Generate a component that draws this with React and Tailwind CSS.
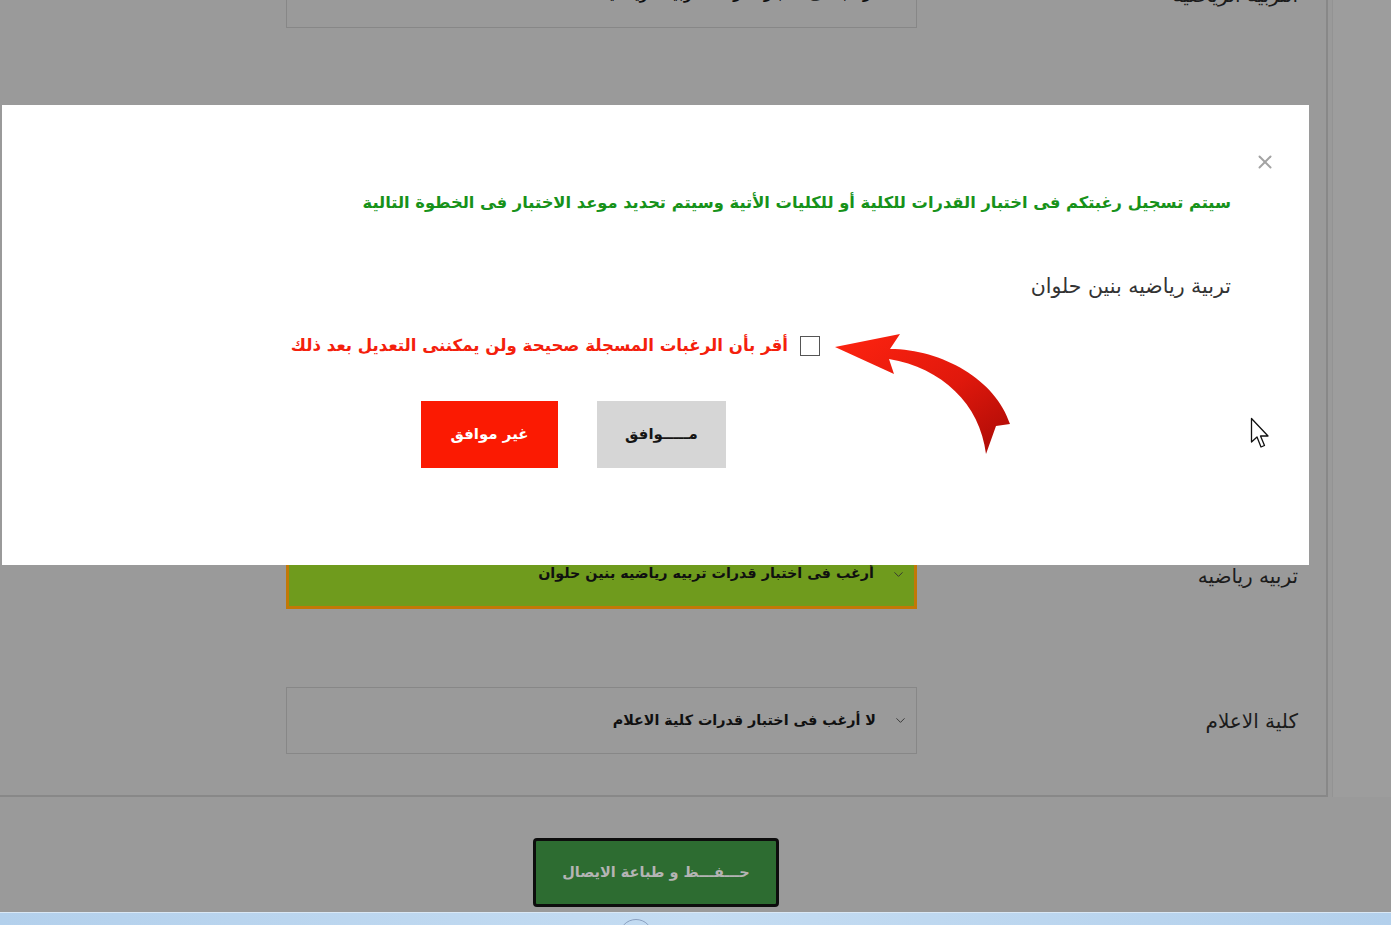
import { ChevronDown, X } from 'lucide-react'

function SelectBox({ text, green }) {
  return (
    <div
      dir="rtl"
      className={`w-[631px] h-[67px] ml-[286px] flex items-center gap-[17px] pr-[8px] ${
        green
          ? 'bg-[#6f9b1d] border-[3px] border-t-0 border-[#c27806]'
          : 'bg-[#9a9a9a] border border-[#878787]'
      }`}
    >
      <ChevronDown size={15} strokeWidth={1.5} className="text-[#333333]" />
      <span className="text-[14.3px] font-bold text-[#101010]">{text}</span>
    </div>
  )
}

function FormRow({ label, text, green, className }) {
  return (
    <div className={`flex items-center ${className}`}>
      <SelectBox text={text} green={green} />
      <div dir="rtl" className="flex-1 pl-[20px] pr-[28px] text-[20px] text-[#1c1c1c]">
        {label}
      </div>
    </div>
  )
}

function CurvedArrow() {
  return (
    <svg width="185" height="130" viewBox="0 0 185 130" className="absolute left-[828px] top-[225px]">
      <defs>
        <linearGradient id="arw" x1="0" y1="0" x2="1" y2="1">
          <stop offset="0" stopColor="#ff2410" />
          <stop offset="0.55" stopColor="#e0180c" />
          <stop offset="1" stopColor="#a80a06" />
        </linearGradient>
      </defs>
      <path
        d="M5 17 L70 4 L60 19 C112 19 166 50 180 94 L166 96 L156 124 C150 74 112 38 59 29 L64 44 Z"
        fill="url(#arw)"
      />
    </svg>
  )
}

function Cursor() {
  return (
    <svg width="22" height="34" viewBox="0 0 22 34" className="absolute left-[1248px] top-[312px]">
      <path
        d="M1.5 1.5 L1.5 25 L7 20 L11 30 L14.5 28.5 L10.5 19 L18 19 Z"
        fill="#ffffff"
        stroke="#111111"
        strokeWidth="1.3"
        strokeLinejoin="round"
      />
    </svg>
  )
}

function Modal() {
  return (
    <div className="absolute left-[2px] top-[105px] w-[1307px] h-[460px] bg-white">
      <button className="absolute right-[33px] top-[46px] text-[#a3a3a3]">
        <X size={22} strokeWidth={2.2} />
      </button>

      <div className="flex flex-col pt-[86px]">
        <p dir="rtl" className="pr-[78px] leading-[24px] text-[16.3px] font-bold text-[#17921a]">
          سيتم تسجيل رغبتكم فى اختبار القدرات للكلية أو للكليات الأتية وسيتم تحديد موعد الاختبار فى الخطوة التالية
        </p>

        <p dir="rtl" className="mt-[59px] pr-[78px] leading-[24px] text-[20.5px] text-[#333333]">
          تربية رياضيه بنين حلوان
        </p>

        <div dir="rtl" className="mt-[36px] pr-[489px] flex items-center gap-[12px] h-[24px]">
          <span className="w-[20px] h-[20px] border border-[#555555] bg-white shrink-0" />
          <span className="text-[16.6px] font-bold text-[#f4200c]">
            أقر بأن الرغبات المسجلة صحيحة ولن يمكننى التعديل بعد ذلك
          </span>
        </div>

        <div dir="rtl" className="mt-[43px] pr-[583px] flex gap-[39px]">
          <button className="w-[129px] h-[67px] bg-[#d6d6d6] text-[15px] font-bold text-[#151515]">
            مـــــوافق
          </button>
          <button className="w-[137px] h-[67px] bg-[#fb1a02] text-[15px] font-bold text-white">
            غير موافق
          </button>
        </div>
      </div>

      <CurvedArrow />
      <Cursor />
    </div>
  )
}

export default function App() {
  return (
    <div className="relative w-full h-[925px] overflow-hidden bg-[#9a9a9a] [font-family:'DejaVu_Sans',sans-serif]">
      <div className="flex">
        <div className="w-[1328px] border-r-2 border-b-2 border-[#888888] pb-[41px]">
          <FormRow
            className="-mt-[39px]"
            label="التربية الرياضية"
            text="أرغب فى اختبار قدرات التربية الرياضية"
          />
          <FormRow
            className="mt-[514px]"
            label="تربيه رياضيه"
            text="أرغب فى اختبار قدرات تربيه رياضيه بنين حلوان"
            green
          />
          <FormRow
            className="mt-[78px]"
            label="كلية الاعلام"
            text="لا أرغب فى اختبار قدرات كلية الاعلام"
          />
        </div>
        <div className="flex-1 bg-[#9d9d9d] border-l border-[#939393] ml-[4px]" />
      </div>

      <div className="mt-[41px] ml-[533px] w-[246px] h-[69px] rounded-[4px] border-[3px] border-[#0d0d0d] bg-[#2d6c31] flex items-center justify-center">
        <span dir="rtl" className="text-[14.5px] font-bold text-[#b4b4b4]">
          حـــفـــظ و طباعة الايصال
        </span>
      </div>

      <div className="mt-[5px] h-[13px] bg-gradient-to-r from-[#b3d0ec] via-[#c4dcf2] to-[#b3d0ec] border-t border-[#d9e8f6] flex justify-center">
        <div className="ml-[-120px] mt-[6px] w-[34px] h-[34px] rounded-full border border-[#8aa0c0]" />
      </div>

      <Modal />
    </div>
  )
}
